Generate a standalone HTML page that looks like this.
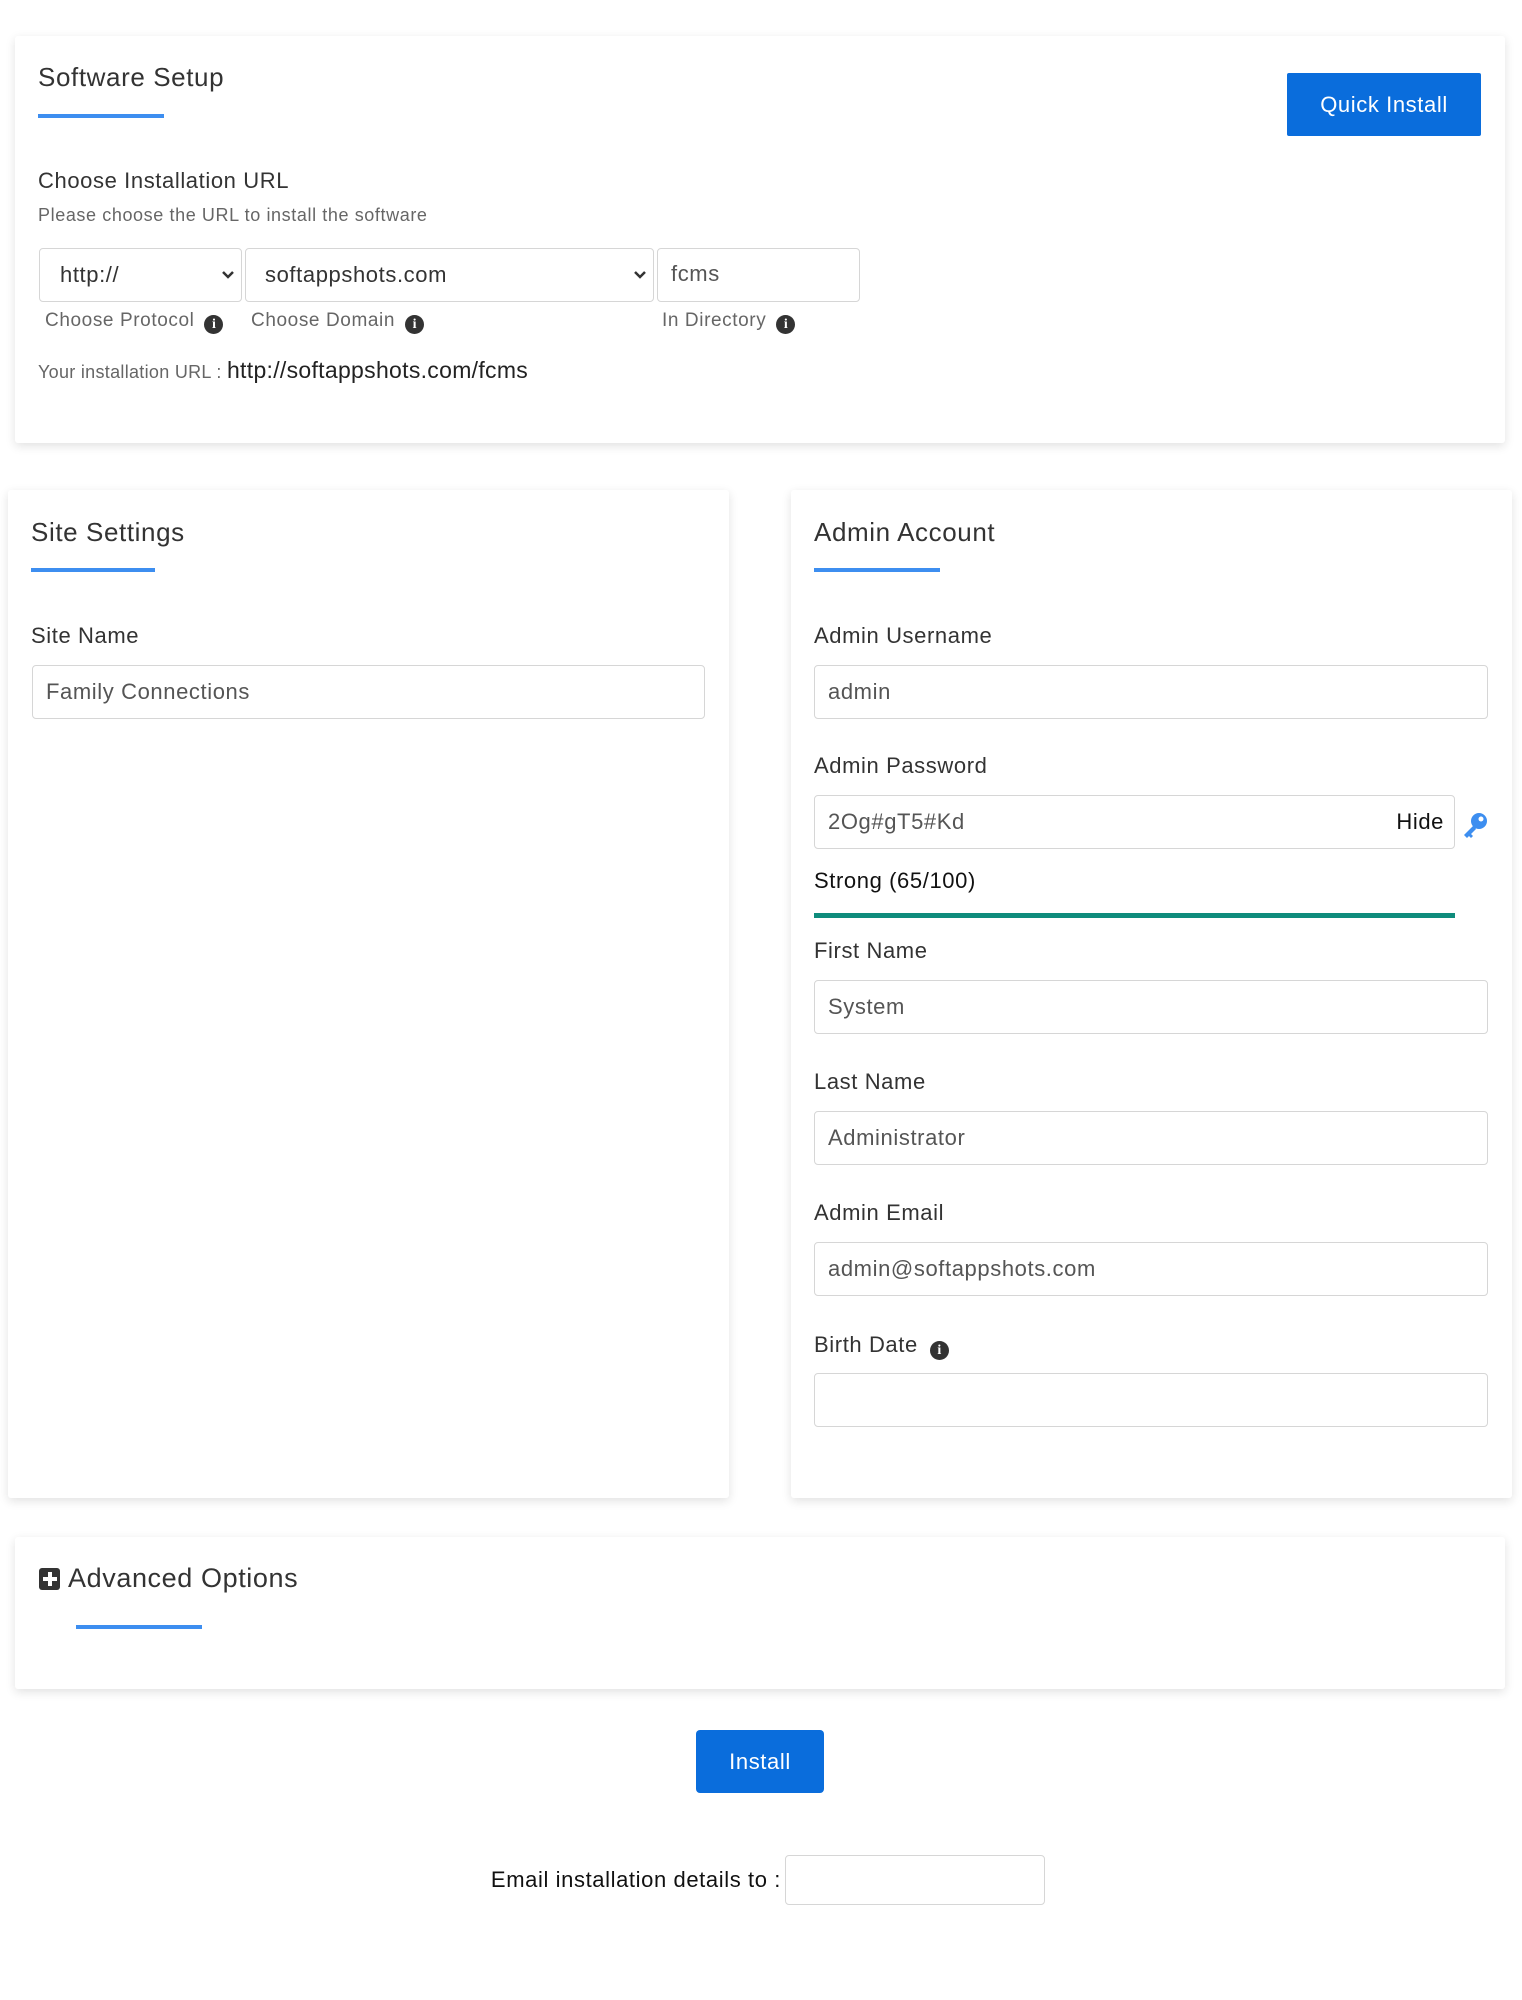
<!DOCTYPE html>
<html><head><meta charset="utf-8"><style>
*{box-sizing:border-box;margin:0;padding:0}
body{width:1522px;height:2000px;background:#fff;font-family:"Liberation Sans",sans-serif;color:#222;position:relative;overflow:hidden;letter-spacing:0.6px}
.a{position:absolute;white-space:nowrap}
.card{position:absolute;background:#fff;box-shadow:0 3px 10px rgba(0,0,0,.12);border-radius:3px}
.ul{position:absolute;height:4px;background:#3d8ef0}
.t{font-size:26px;color:#333}
.lb{font-size:22px;color:#333}
.in{position:absolute;border:1.5px solid #d6d6d6;border-radius:4px;font-size:22px;color:#555;padding-left:13px;display:flex;align-items:center;background:#fff}
.help{font-size:19px;color:#666}
.i{display:inline-block;width:19px;height:19px;border-radius:50%;background:#333;color:#fff;font-size:14px;font-weight:bold;text-align:center;line-height:19px;font-family:"Liberation Serif",serif;vertical-align:-2px;margin-left:10px;letter-spacing:0}
.chev{position:absolute;right:6px;top:14px}
.btn{position:absolute;background:#0a6ddc;color:#fff;font-size:22px;display:flex;align-items:center;justify-content:center;border-radius:2px}
</style></head><body>

<div class="card" style="left:15px;top:36px;width:1490px;height:407px"></div>
<div class="a t" style="left:38px;top:62px">Software Setup</div>
<div class="ul" style="left:38px;top:114px;width:126px"></div>
<div class="btn" style="left:1287px;top:73px;width:194px;height:63px">Quick Install</div>
<div class="a" style="left:38px;top:168px;font-size:22px;color:#333">Choose Installation URL</div>
<div class="a" style="left:38px;top:205px;font-size:18px;color:#666">Please choose the URL to install the software</div>
<div class="in" style="left:39px;top:248px;width:203px;height:54px;padding-left:20px;color:#333">http://<svg class="chev" width="14" height="24" viewBox="0 0 14 24"><path d="M2 9l5 5 5-5" stroke="#333" stroke-width="2.5" fill="none"/></svg></div>
<div class="in" style="left:245px;top:248px;width:409px;height:54px;padding-left:19px;color:#333">softappshots.com<svg class="chev" width="14" height="24" viewBox="0 0 14 24"><path d="M2 9l5 5 5-5" stroke="#333" stroke-width="2.5" fill="none"/></svg></div>
<div class="in" style="left:657px;top:248px;width:203px;height:54px;padding-left:13px;align-items:flex-start;padding-top:12px">fcms</div>
<div class="a help" style="left:45px;top:310px">Choose Protocol<span class="i">i</span></div>
<div class="a help" style="left:251px;top:310px">Choose Domain<span class="i">i</span></div>
<div class="a help" style="left:662px;top:310px">In Directory<span class="i">i</span></div>
<div class="a" style="left:38px;top:357px;font-size:18px;color:#666;letter-spacing:0.3px">Your installation URL : <span style="font-size:23px;color:#222">http://softappshots.com/fcms</span></div>

<div class="card" style="left:8px;top:490px;width:721px;height:1008px"></div>
<div class="a t" style="left:31px;top:517px">Site Settings</div>
<div class="ul" style="left:31px;top:568px;width:124px"></div>
<div class="a lb" style="left:31px;top:623px">Site Name</div>
<div class="in" style="left:32px;top:665px;width:673px;height:54px">Family Connections</div>

<div class="card" style="left:791px;top:490px;width:721px;height:1008px"></div>
<div class="a t" style="left:814px;top:517px">Admin Account</div>
<div class="ul" style="left:814px;top:568px;width:126px"></div>
<div class="a lb" style="left:814px;top:623px">Admin Username</div>
<div class="in" style="left:814px;top:665px;width:674px;height:54px">admin</div>
<div class="a lb" style="left:814px;top:753px">Admin Password</div>
<div class="in" style="left:814px;top:795px;width:641px;height:54px">2Og#gT5#Kd<span style="position:absolute;right:10px;color:#111">Hide</span></div>
<svg class="a" style="left:1460px;top:810px" width="30" height="30" viewBox="0 0 30 30"><circle cx="19" cy="11" r="8" fill="#3d8ef0"/><circle cx="21" cy="9" r="2.5" fill="#fff"/><path d="M14 15L4 25l3 3 2-2 2 2 2-2-2-2 5-5z" fill="#3d8ef0"/></svg>
<div class="a" style="left:814px;top:868px;font-size:22px;color:#111">Strong (65/100)</div>
<div class="a" style="left:814px;top:913px;width:641px;height:5px;background:#0f8c7c"></div>
<div class="a lb" style="left:814px;top:938px">First Name</div>
<div class="in" style="left:814px;top:980px;width:674px;height:54px">System</div>
<div class="a lb" style="left:814px;top:1069px">Last Name</div>
<div class="in" style="left:814px;top:1111px;width:674px;height:54px">Administrator</div>
<div class="a lb" style="left:814px;top:1200px">Admin Email</div>
<div class="in" style="left:814px;top:1242px;width:674px;height:54px">admin@softappshots.com</div>
<div class="a lb" style="left:814px;top:1332px">Birth Date<span class="i" style="margin-left:12px">i</span></div>
<div class="in" style="left:814px;top:1373px;width:674px;height:54px"></div>

<div class="card" style="left:15px;top:1537px;width:1490px;height:152px"></div>
<div class="a" style="left:39px;top:1568px;width:21px;height:22px;background:#333;border-radius:3px"><div style="position:absolute;left:9px;top:4px;width:4px;height:14px;background:#fff"></div><div style="position:absolute;left:4px;top:9px;width:14px;height:4px;background:#fff"></div></div>
<div class="a" style="left:68px;top:1563px;font-size:27px;color:#333">Advanced Options</div>
<div class="ul" style="left:76px;top:1625px;width:126px"></div>

<div class="btn" style="left:696px;top:1730px;width:128px;height:63px;border-radius:4px">Install</div>
<div class="a" style="right:741px;top:1867px;font-size:22px;color:#111">Email installation details to :</div>
<div class="in" style="left:785px;top:1855px;width:260px;height:50px"></div>
</body></html>
